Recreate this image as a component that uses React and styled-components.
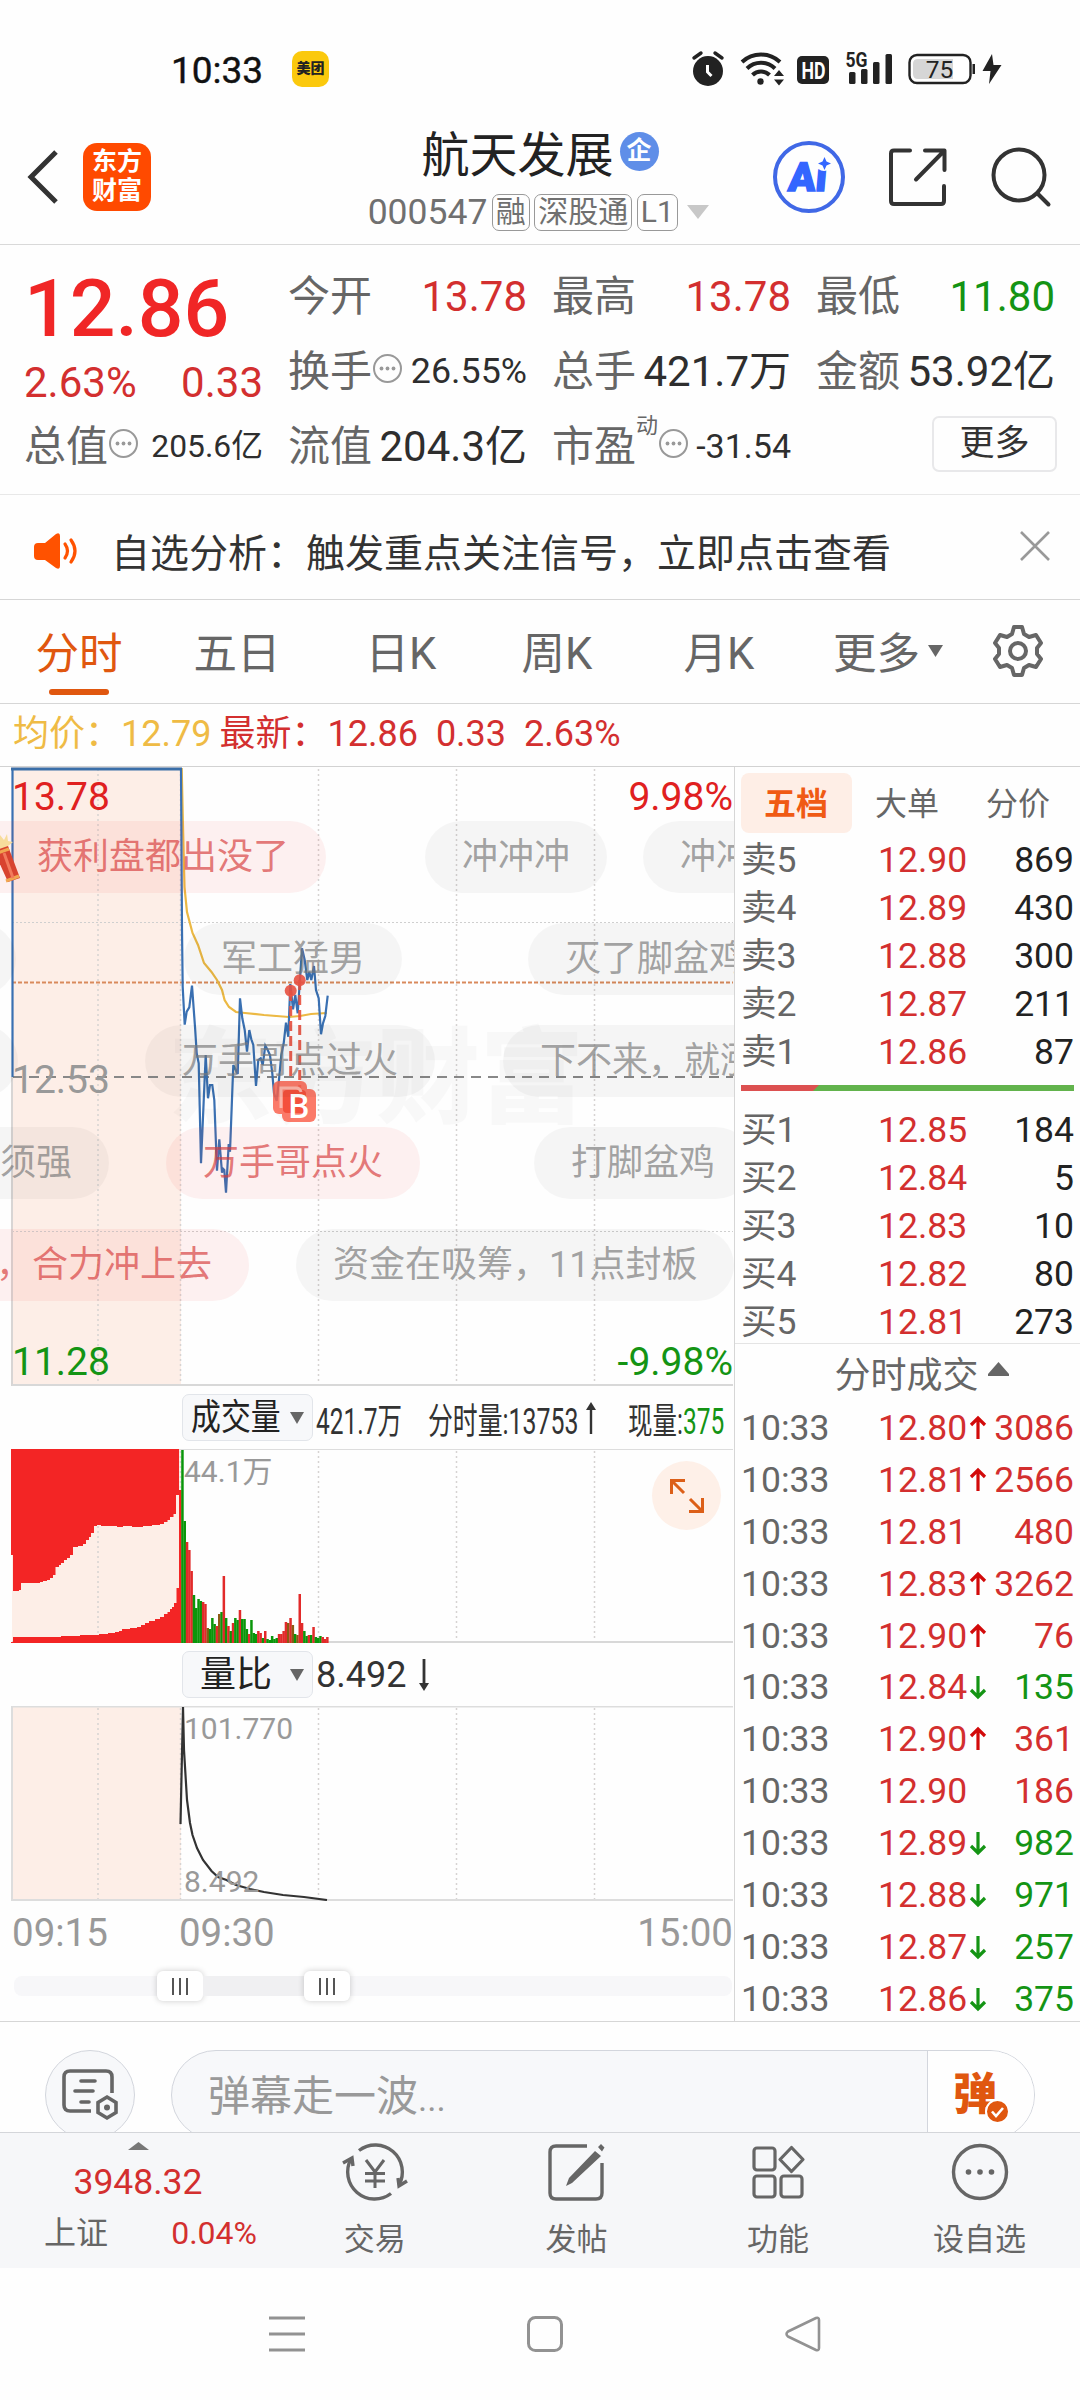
import React from 'react'
import styled, { createGlobalStyle, css } from 'styled-components'

const RED = '#d32f2f'
const GREEN = '#149414'
const ORANGE = '#e0570f'

const depthAsk = [
  ['卖5', '12.90', '869'],
  ['卖4', '12.89', '430'],
  ['卖3', '12.88', '300'],
  ['卖2', '12.87', '211'],
  ['卖1', '12.86', '87'],
]

const depthBid = [
  ['买1', '12.85', '184'],
  ['买2', '12.84', '5'],
  ['买3', '12.83', '10'],
  ['买4', '12.82', '80'],
  ['买5', '12.81', '273'],
]

const trades = [
  ['12.80', 'up', '3086'],
  ['12.81', 'up', '2566'],
  ['12.81', '', '480'],
  ['12.83', 'up', '3262'],
  ['12.90', 'up', '76'],
  ['12.84', 'down', '135'],
  ['12.90', 'up', '361'],
  ['12.90', '', '186'],
  ['12.89', 'down', '982'],
  ['12.88', 'down', '971'],
  ['12.87', 'down', '257'],
  ['12.86', 'down', '375'],
]

const bubbles = [
  { text: '获利盘都出没了', x: -60, row: 0, pad: 97, hot: true },
  { text: '冲冲冲', x: 425, row: 0 },
  { text: '冲冲冲', x: 643, row: 0 },
  { text: '', x: -58, row: 1 },
  { text: '军工猛男', x: 184, row: 1 },
  { text: '灭了脚盆鸡', x: 528, row: 1 },
  { text: '', x: -56, row: 2 },
  { text: '万手哥点过火', x: 145, row: 2 },
  { text: '下不来，就涨', x: 503, row: 2 },
  { text: '须强', x: -37, row: 3 },
  { text: '万手哥点火', x: 166, row: 3, hot: true },
  { text: '打脚盆鸡', x: 534, row: 3 },
  { text: '，合力冲上去', x: -41, row: 4, hot: true },
  { text: '资金在吸筹，11点封板', x: 296, row: 4 },
]

const pricePoints =
  '12.5,310 12.5,2 181,2 182,163 182.7,220 184.7,257.7 186.7,244.7 189.3,240.3 192,218.7 195,259.7 196.7,286.3 198.7,296.3 201,396.3 205.7,288 208,331.3 210,318 212.3,318 214.3,333 217,403.7 219.3,372.3 222,405.7 223.3,402 224.3,403 226,425.7 228.7,377 230,384.7 233.3,298 237.7,307 240,231.3 242.3,251.3 244.7,263 247,284.7 249.3,263 251.3,272.3 253.3,278 256,319 258.3,293 260.7,291.3 262.7,298 265.3,278.7 267.7,283 270,288 272.3,306.3 274,326.3 276.7,334 279.3,309.7 281.3,288 283.7,276.3 286,255.7 288.3,269.7 290.3,217 293,242.3 295.3,228 297.7,246.3 299.7,216.3 302,181.3 304.7,193 307.3,213 309.3,204.7 311.3,213 314,199 316,223 318.7,231.3 321,267.3 323,256.3 325.3,249 327.7,228.7'

const avgPoints =
  '181.7,1 183,60 184.5,120 187,145 192.5,166 198,178 204,196 211.5,205 217,213 222,223 224.6,233 229,240 236,245 245,246 264,248 289,250 300,249 311,247 327,246'

const ratioPoints =
  '180.5,118 183,1 184,44 187,94 190,117 192.5,129 197,142 203,154 211.5,165 218,171 226.5,174 236,179 250,183 264,186 283,189 304,191 327,194'

const volumes = [193, 122, 101, 93, 72, 48, 35, 44, 42, 41, 39, 15, 14, 25, 19, 17, 29, 31, 67, 25, 17, 12, 20, 25, 23, 33, 24, 24, 14, 9, 23, 10, 9, 12, 10, 5, 12, 4, 3, 7, 4, 5, 9, 9, 12, 21, 20, 25, 18, 9, 8, 49, 20, 12, 7, 8, 8, 16, 6, 5, 7, 6, 4, 6]
const volumeSides = 'ggrrrggggrrmgggrmgrgrgrggrgggrgggrrgrgggggrrrrmrmgmrrggrgrgggrrr'
const sideColor = { g: '#0a960a', r: '#e22a2a', m: '#8c5a14' }

function Grid({ height }) {
  return (
    <g stroke="#d6d3d2" strokeWidth="1.5" strokeDasharray="2 3">
      {[98, 180.5, 318.5, 456.5, 594.5].map((x) => (
        <line key={x} x1={x} x2={x} y1="2" y2={height} />
      ))}
    </g>
  )
}

function StatusIcons() {
  return (
    <svg width="312" height="36" viewBox="692 51 312 36" fill="#222">
      <circle cx="708" cy="71" r="15" />
      <path d="M694 58l7-5M715 53l7 5" stroke="#222" strokeWidth="3.4" strokeLinecap="round" />
      <path d="M707.5 65v7l4 4" stroke="#fff" strokeWidth="3" fill="none" />
      <g fill="none" stroke="#222" strokeWidth="4">
        <path d="M742 62a28 28 0 0 1 38 0" />
        <path d="M747 68.500a20 20 0 0 1 28 0" />
        <path d="M752.500 75a12 12 0 0 1 17 0" />
      </g>
      <circle cx="760.500" cy="81.500" r="3.200" />
      <path d="M779 70l5 6h-10zM779 85.500l5-6h-10z" />
      <rect x="797" y="56" width="32" height="28" rx="5" />
      <text x="801.500" y="78.500" fill="#fff" fontSize="23.500" fontWeight="700" textLength="24" lengthAdjust="spacingAndGlyphs">HD</text>
      <text x="845.500" y="67" fontSize="20" fontWeight="700" textLength="22" lengthAdjust="spacingAndGlyphs">5G</text>
      <rect x="849" y="72" width="6.500" height="12" rx="1.500" />
      <rect x="861" y="69" width="6.500" height="15" rx="1.500" />
      <rect x="873" y="62" width="6.500" height="22" rx="1.500" />
      <rect x="885.500" y="54" width="6.500" height="30" rx="1.500" />
      <rect x="909.500" y="55" width="61" height="28" rx="7.500" fill="#fff" stroke="#222" strokeWidth="2.400" />
      <path d="M918 59h35v20h-35q-5 0-5-5v-10q0-5 5-5z" fill="#d6d6d6" />
      <rect x="972.500" y="64" width="2.500" height="10" />
      <text x="939.500" y="78" fontSize="24.500" textAnchor="middle">75</text>
      <path d="M992 54l-9.500 17h8l-1.500 13 12.500-19h-8z" />
    </svg>
  )
}

function MoreDots() {
  return (
    <svg width="31" height="31" viewBox="0 0 31 31" fill="#999">
      <circle cx="15.500" cy="15.500" r="13.500" fill="none" stroke="#999" strokeWidth="2" />
      <circle cx="9.500" cy="15.500" r="1.900" />
      <circle cx="15.500" cy="15.500" r="1.900" />
      <circle cx="21.500" cy="15.500" r="1.900" />
    </svg>
  )
}

function Arrow({ dir }) {
  return (
    <svg width="16" height="24" viewBox="0 0 16 24" fill="none" strokeWidth="3.200" stroke={dir === 'up' ? '#d20a0a' : GREEN}>
      {dir === 'up' && <path d="M8 23V3M1 9l7-7 7 7" />}
      {dir === 'down' && <path d="M8 1v20M1 15l7 7 7-7" />}
    </svg>
  )
}

function Stat({ label, value, color, small, sup, dots }) {
  return (
    <StatCell>
      <StatLabel>
        {label}
        {sup && <sup>{sup}</sup>}
        {dots && <MoreDots />}
      </StatLabel>
      <StatValue $color={color} $size={small}>{value}</StatValue>
    </StatCell>
  )
}

function PricePane() {
  return (
    <Pane $h={619}>
      <svg width="734" height="619">
        <rect x="12" y="0" width="169" height="619" fill="#fdeee7" />
        <Grid height={619} />
        <g stroke="#cfcfcf" strokeDasharray="2 2">
          <line x1="12" x2="733" y1="155.500" y2="155.500" />
          <line x1="12" x2="733" y1="464.500" y2="464.500" />
        </g>
        <text x="376" y="348" fontSize="104" fontWeight="900" fill="rgba(0,0,0,.025)" textAnchor="middle">东方财富</text>
        <line x1="12" x2="733" y1="310" y2="310" stroke="#888" strokeWidth="2" strokeDasharray="10 7" />
        <line x1="12" x2="733" y1="215.500" y2="215.500" stroke="#d98a5c" strokeWidth="2" strokeDasharray="4 2" />
        <line x1="12" x2="12" y1="310" y2="619" stroke="#d8d5d4" strokeWidth="2" />
        <line x1="12" x2="733" y1="618" y2="618" stroke="#d8d8d8" strokeWidth="2" />
        <polyline points={avgPoints} fill="none" stroke="#ecb944" strokeWidth="2.200" />
        <polyline points={pricePoints} fill="none" stroke="#3a70b2" strokeWidth="2.200" />
        <line x1="11" x2="182" y1="2" y2="2" stroke="#3a6ea8" strokeWidth="3" />
        <g stroke="#e8503e" strokeWidth="3" strokeDasharray="10 5" opacity=".9">
          <line x1="290.700" x2="290.700" y1="224" y2="314" />
          <line x1="299.700" x2="299.700" y1="213" y2="322" />
        </g>
        <g fill="#f05545" opacity=".9">
          <circle cx="290.700" cy="223.700" r="6" />
          <circle cx="299.700" cy="213.300" r="6" />
        </g>
        <g fill="#fb6450" opacity=".85">
          <rect x="273" y="314" width="34" height="33" rx="6" />
          <rect x="282" y="322" width="34" height="33" rx="6" />
        </g>
        <rect x="283" y="323" width="23" height="23" rx="4" fill="#f4503c" />
        <path d="M281 341v-20h15q4 0 5 4" fill="none" stroke="#fcb5a8" strokeWidth="3" />
        <text x="299" y="350.500" fontSize="33" fontWeight="500" fill="#fff" textAnchor="middle">B</text>
      </svg>
      <AxisText $top={14} $color="#e02020">13.78</AxisText>
      <AxisText $top={14} $right $color="#e02020">9.98%</AxisText>
      <AxisText $top={297} $color="#999">12.53</AxisText>
      <AxisText $top={579} $color={GREEN}>11.28</AxisText>
      <AxisText $top={579} $right $color={GREEN}>-9.98%</AxisText>
      {bubbles.map((b, i) => (
        <Bubble key={i} $x={b.x} $row={b.row} $pad={b.pad} $hot={b.hot}>{b.text}</Bubble>
      ))}
      <Cracker width="24" height="52" viewBox="0 0 24 52">
        <path d="M0 4l4 5 3-6 1 7 5 1-5 4 2 5-6-2-4 2z" fill="#f7dc9c" />
        <path d="M-6 20L8 15l12 32-12 4z" fill="#d8432f" />
        <path d="M-5 23L9 18M6 50l13-5" stroke="#f0a650" strokeWidth="3" />
        <path d="M4 22l9 25" stroke="#f27a5c" strokeWidth="3" />
      </Cracker>
    </Pane>
  )
}

function VolumePane() {
  return (
    <Pane $h={194}>
      <svg width="734" height="194">
        <rect x="12" width="169" height="194" fill="#fdeee7" />
        <Grid height={194} />
        <line x1="12" x2="733" y1=".5" y2=".5" stroke="#ddd" />
        <line x1="12" x2="733" y1="193" y2="193" stroke="#d8d8d8" strokeWidth="2" />
        <g fill="#f32525">
          <path d="M11 0V106H13V142H19V141H21V134H40V133H43V132H47V131H50V129H53V126H55.500V118H59V116H61V114H64V111H67V109H70V106H73V98H78V97H83V95H86V91H89V88H91V84H94V77H97V76H101V77H117V78H123V77H132V78H143V77H152V76H160V75H164V73H167.500V71H170V68H173.500V65H176V46H179V0z" />
          <path d="M11 194V193H13V188H61V187H80V186H99V185H108V184H115V183H119V182H122V180H130V179H137V178H141V176H145V174H149V172H155V170H160V168H164V165H167.500V163H170V160H172V158H174V154H176.500V139H179V41H181.500V194z" />
        </g>
        {volumes.map((v, i) => (
          <rect key={i} x={181.2 + i * 2.3} y={194 - v} width="2.5" height={v} fill={sideColor[volumeSides[i]]} />
        ))}
      </svg>
      <ScaleText $top={6}>44.1万</ScaleText>
      <Expand>
        <svg width="34" height="34" viewBox="0 0 34 34" fill="none" stroke="#dc5f18" strokeWidth="3">
          <path d="M1.500 15V1.500H15M2 2l12 12M32.500 19v13.500H19M32 32L20 20" />
        </svg>
      </Expand>
    </Pane>
  )
}

function RatioPane() {
  return (
    <Pane $h={195}>
      <svg width="734" height="195">
        <rect x="12" width="169" height="194" fill="#fdeee7" />
        <Grid height={194} />
        <path d="M733 .5H12V194h721" fill="none" stroke="#ddd" strokeWidth="2" />
        <polyline points={ratioPoints} fill="none" stroke="#333" strokeWidth="2.200" />
      </svg>
      <ScaleText $top={6}>101.770</ScaleText>
      <ScaleText $top={159}>8.492</ScaleText>
    </Pane>
  )
}

function App() {
  return (
    <>
      <GlobalStyle />
      <Screen>
        <StatusBar>
          <Clock>10:33</Clock>
          <Meituan>美团</Meituan>
          <StatusIcons />
        </StatusBar>

        <Header>
          <HeaderLeft>
            <svg width="32" height="56" viewBox="0 0 32 56" fill="none" stroke="#333" strokeWidth="5">
              <path d="M29 3L4 28l25 25" />
            </svg>
            <Logo>东方<br />财富</Logo>
          </HeaderLeft>
          <Title>
            <h1>航天发展 <Badge>企</Badge></h1>
            <SubTitle>
              000547
              <Tag>融</Tag>
              <Tag>深股通</Tag>
              <Tag>L1</Tag>
              <svg width="22" height="14"><path d="M0 0h22L11 14z" fill="#c8c8c8" /></svg>
            </SubTitle>
          </Title>
          <HeaderRight>
            <svg width="72" height="72" viewBox="0 0 72 72">
              <circle cx="36" cy="36" r="34" fill="none" stroke="#4068e6" strokeWidth="4" />
              <text x="15" y="50" fontSize="40" fontWeight="900" fill="#3366ff" stroke="#3366ff" strokeWidth="1.500" transform="translate(4 0) skewX(-5)">Ai</text>
              <circle cx="51" cy="22" r="8" fill="#fefefe" />
              <path d="M51.500 16l2 4.500 4.500 2-4.500 2-2 4.500-2-4.500-4.500-2 4.500-2z" fill="#3366ff" />
            </svg>
            <svg width="58" height="58" viewBox="0 0 58 58" fill="none" stroke="#333" strokeWidth="4" strokeLinecap="round" strokeLinejoin="round">
              <path d="M21 2.500H5q-3 0-3 3V53q0 3 3 3h47q3 0 3-3V38" />
              <path d="M36 2.500h19.500V22M55 3L27 31.500" />
            </svg>
            <svg width="60" height="60" viewBox="0 0 60 60" fill="none" stroke="#333" strokeWidth="4" strokeLinecap="round">
              <circle cx="28" cy="28" r="25.500" />
              <path d="M47 47l10.500 10.500" />
            </svg>
          </HeaderRight>
        </Header>

        <Quote>
          <PriceBlock>
            <Price>12.86</Price>
            <Change><span>2.63%</span><span>0.33</span></Change>
          </PriceBlock>
          <Stat label="今开" value="13.78" color={RED} />
          <Stat label="最高" value="13.78" color={RED} />
          <Stat label="最低" value="11.80" color={GREEN} />
          <Stat label="换手" value="26.55%" dots small={35.8} />
          <Stat label="总手" value="421.7万" />
          <Stat label="金额" value="53.92亿" />
          <Stat label="总值" value="205.6亿" dots small={31.8} />
          <Stat label="流值" value="204.3亿" />
          <Stat label="市盈" sup="动" value="-31.54" dots small={34} />
          <MoreButton>更多</MoreButton>
        </Quote>

        <Notice>
          <svg width="44" height="36" viewBox="0 0 44 36" fill="#ff5200">
            <path d="M4 10h7L22 1q4-2 4 2v30q0 4-4 2l-11-8H4q-4 0-4-4v-9q0-4 4-4z" />
            <path d="M31 11q5 7 0 14M37 7q8 11 0 22" fill="none" stroke="#ff5200" strokeWidth="3.200" strokeLinecap="round" />
          </svg>
          <p>自选分析：触发重点关注信号，立即点击查看</p>
          <svg width="30" height="30" viewBox="0 0 30 30" stroke="#999" strokeWidth="2.600"><path d="M1 1l28 28M29 1L1 29" /></svg>
        </Notice>

        <Tabs>
          <Tab $active>分时</Tab>
          <Tab>五日</Tab>
          <Tab>日K</Tab>
          <Tab>周K</Tab>
          <Tab>月K</Tab>
          <Tab>更多<svg width="15" height="12"><path d="M0 0h15L7.500 12z" fill="#666" /></svg></Tab>
          <Tab>
            <svg width="54" height="54" viewBox="0 0 54 54" fill="none" stroke="#666" strokeWidth="4" strokeLinejoin="round">
              <path d="M23 3h8l2 7 5 3 7-2 5 8-4 5v6l4 5-5 8-7-2-5 3-2 7h-8l-2-7-5-3-7 2-5-8 4-5v-6l-4-5 5-8 7 2 5-3z" />
              <circle cx="27" cy="27" r="8" />
            </svg>
          </Tab>
        </Tabs>

        <Latest>
          <Avg>均价：12.79</Avg>
          <span>最新：12.86</span>
          <span>0.33</span>
          <span>2.63%</span>
        </Latest>

        <Main>
          <Charts>
            <PricePane />
            <PaneHead>
              <Picker><Squeeze $w={90} $scale={0.83}>成交量</Squeeze><i /></Picker>
              <Squeeze $w={112} $scale={0.68}>421.7万</Squeeze>
              <Squeeze $w={154} $scale={0.69}>分时量:13753</Squeeze>
              <LongArrow width="12" height="32" viewBox="0 0 12 32"><path d="M6 0l5 8H7.200v24H4.800V8H1z" fill="#333" /></LongArrow>
              <Squeeze $w={98} $scale={0.68}>现量:<b>375</b></Squeeze>
            </PaneHead>
            <VolumePane />
            <PaneHead>
              <Picker $wide>量比<i /></Picker>
              8.492
              <DownArrow width="12" height="32" viewBox="0 0 12 32"><path d="M6 32l5-8H7.400V0H4.600v24H1z" fill="#333" /></DownArrow>
            </PaneHead>
            <RatioPane />
            <TimeAxis><span>09:15</span><span>09:30</span><span>15:00</span></TimeAxis>
            <Track>
              <Handle><i /><i /><i /></Handle>
              <TrackRange />
              <Handle><i /><i /><i /></Handle>
            </Track>
          </Charts>

          <Side>
            <SideTabs>
              <SideTab $active>五档</SideTab>
              <SideTab>大单</SideTab>
              <SideTab>分价</SideTab>
            </SideTabs>
            {depthAsk.map(([label, price, qty]) => (
              <DepthRow key={label}><span>{label}</span><em>{price}</em><strong>{qty}</strong></DepthRow>
            ))}
            <RatioBar><svg width="333" height="6"><path d="M0 0h333v6H0z" fill="#62b34c" /><path d="M0 0h78l-6 6H0z" fill="#dc5050" /></svg></RatioBar>
            {depthBid.map(([label, price, qty]) => (
              <DepthRow key={label}><span>{label}</span><em>{price}</em><strong>{qty}</strong></DepthRow>
            ))}
            <TradesHead>分时成交<svg width="21" height="14"><path d="M10.500 0L21 12v2H0v-2z" fill="#666" /></svg></TradesHead>
            {trades.map(([price, dir, qty], i) => (
              <TradeRow key={i} $down={dir === 'down'}>
                <span>10:33</span>
                <em>{price}</em>
                <Arrow dir={dir} />
                <strong>{qty}</strong>
              </TradeRow>
            ))}
          </Side>
        </Main>

        <CommentBar>
          <RoundButton>
            <svg width="56" height="52" viewBox="0 0 56 52" fill="none" stroke="#666" strokeWidth="3.600">
              <path d="M29 42H8q-6 0-6-6V8q0-6 6-6h36q6 0 6 6v16" />
              <path d="M19 12h14M13 22h18M19 33h8" strokeLinecap="round" />
              <path d="M45 28l9 5.500v10L45 49l-9-5.500v-10z" />
              <circle cx="45" cy="38.500" r="3" fill="#666" stroke="none" />
            </svg>
          </RoundButton>
          <CommentInput>
            <span>弹幕走一波<i>...</i></span>
            <Danmu>
              弹
              <svg width="25" height="25" viewBox="0 0 25 25">
                <circle cx="12.500" cy="12.500" r="11.500" fill={ORANGE} stroke="#fff" strokeWidth="2" />
                <path d="M7 12.500l4 4.500 7-8" fill="none" stroke="#fff" strokeWidth="2.600" />
              </svg>
            </Danmu>
          </CommentInput>
        </CommentBar>

        <BottomBar>
          <IndexCell>
            <svg width="21" height="8"><path d="M10.500 0L21 8H0z" fill="#777" /></svg>
            <IndexValue>3948.32</IndexValue>
            <IndexLine><span>上证</span><b>0.04%</b></IndexLine>
          </IndexCell>
          <NavCell>
            <svg width="66" height="60" viewBox="0 0 66 60" fill="none" stroke="#666" strokeWidth="3.400">
              <path d="M17 8.500A27 27 0 0 1 57 43M49 51.500A27 27 0 0 1 9 17" />
              <path d="M1 21l9-5 1 8M65 39l-8 5-1-8" />
              <path d="M24 18l9 12 9-12M33 30v16M23 31.500h20M23 39h20" strokeWidth="3" />
            </svg>
            交易
          </NavCell>
          <NavCell>
            <svg width="58" height="60" viewBox="0 0 58 60" fill="none" stroke="#666" strokeWidth="3.400">
              <path d="M40 4H9q-6 0-6 6v41q0 6 6 6h40q6 0 6-6V21" />
              <path d="M48 9l6 5-29 27-6 3 3-8zM51 5l3-3 3.500 3.500-2.500 4z" fill="#666" stroke="none" />
            </svg>
            发帖
          </NavCell>
          <NavCell>
            <svg width="54" height="60" viewBox="0 0 54 60" fill="none" stroke="#666" strokeWidth="3.200">
              <rect x="3" y="6" width="21" height="22" rx="3" />
              <rect x="3" y="34" width="21" height="21" rx="3" />
              <rect x="30" y="34" width="21" height="21" rx="3" />
              <path d="M40.500 5.500L52 17.500 40.500 29.500 29 17.500z" strokeLinejoin="round" />
            </svg>
            功能
          </NavCell>
          <NavCell>
            <svg width="58" height="60" viewBox="0 0 58 60" fill="#666">
              <circle cx="29" cy="30" r="26.500" fill="none" stroke="#666" strokeWidth="3.400" />
              <circle cx="17.500" cy="30" r="2.800" />
              <circle cx="29" cy="30" r="2.800" />
              <circle cx="40.500" cy="30" r="2.800" />
            </svg>
            设自选
          </NavCell>
        </BottomBar>

        <SystemNav>
          <svg width="36" height="36" stroke="#929292" strokeWidth="3"><path d="M0 2h36M0 18h36M0 34h36" /></svg>
          <svg width="36" height="36" fill="none" stroke="#929292" strokeWidth="3"><rect x="1.500" y="1.500" width="33" height="33" rx="7" /></svg>
          <svg width="36" height="36" fill="none" stroke="#929292" strokeWidth="2.600" strokeLinejoin="round"><path d="M3 15.500L31 2q3-1 3 2v28q0 3-3 2L3 20.500q-3-2.500 0-5z" /></svg>
        </SystemNav>
      </Screen>
    </>
  )
}

export default App

const GlobalStyle = createGlobalStyle`
  * {
    box-sizing: border-box;
  }

  body {
    margin: 0;
    background: #fefefe;
    font-family: Roboto, 'Noto Sans CJK SC', sans-serif;
    color: #333;
  }

  svg {
    display: block;
    flex: none;
    overflow: visible;
  }

  h1, p {
    margin: 0;
    font-weight: 400;
  }

  em, i {
    font-style: normal;
  }

  b, strong {
    font-weight: 400;
  }
`

const Screen = styled.div`
  width: 1080px;
  height: 2400px;
  display: flex;
  flex-direction: column;
  overflow: hidden;
  white-space: nowrap;
`

const StatusBar = styled.div`
  height: 100px;
  display: flex;
  align-items: flex-start;
  padding: 51px 76px 0 171px;

  & > svg {
    margin-left: auto;
  }
`

const Clock = styled.span`
  width: 121px;
  font-size: 37px;
  line-height: 39px;
  color: #111;
  -webkit-text-stroke: 0.4px #111;
`

const Meituan = styled.span`
  width: 37px;
  height: 36px;
  border-radius: 10px;
  background: #fbc90d;
  color: #222;
  font-size: 14px;
  font-weight: 900;
  line-height: 35px;
  text-align: center;
`

const Header = styled.header`
  height: 145px;
  display: grid;
  grid-template-columns: 320px 1fr 320px;
  border-bottom: 1.5px solid #d9d9d9;
`

const HeaderLeft = styled.div`
  display: flex;
  align-items: center;
  gap: 24px;
  padding: 10px 0 0 27px;
`

const Logo = styled.div`
  width: 68px;
  height: 68px;
  border-radius: 14px;
  background: #ff4a00;
  color: #fff;
  font-size: 25px;
  font-weight: 700;
  line-height: 29px;
  padding-top: 4px;
  text-align: center;
`

const Title = styled.div`
  display: flex;
  flex-direction: column;
  align-items: center;
  padding-top: 21px;

  & h1 {
    display: flex;
    align-items: center;
    gap: 6px;
    height: 60px;
    font-size: 48px;
    color: #222;
  }
`

const Badge = styled.span`
  width: 39px;
  height: 39px;
  margin-top: 1px;
  border-radius: 50%;
  background: #5f8ee8;
  color: #fff;
  font-size: 25px;
  font-weight: 700;
  line-height: 37px;
  text-align: center;
`

const SubTitle = styled.div`
  display: flex;
  align-items: center;
  gap: 4.5px;
  height: 54px;
  margin: 4px 3px 0 0;
  font-size: 35.5px;
  color: #707070;

  & svg {
    margin-left: 5px;
  }
`

const Tag = styled.span`
  height: 37px;
  padding: 0 3px;
  border: 1.5px solid #999;
  border-radius: 7px;
  font-size: 30px;
  line-height: 34px;
`

const HeaderRight = styled.div`
  display: flex;
  align-items: center;
  justify-content: flex-end;
  gap: 44px;
  padding: 9px 29px 0 0;
`

const Quote = styled.section`
  height: 250px;
  display: grid;
  grid-template-columns: repeat(4, 239px);
  grid-template-rows: repeat(3, 75px);
  column-gap: 25px;
  padding: 14px 0 0 24px;
  border-bottom: 1px solid #e8e8e8;
`

const PriceBlock = styled.div`
  grid-row: span 2;
  display: flex;
  flex-direction: column;
`

const Price = styled.div`
  font-size: 80.5px;
  font-weight: 500;
  line-height: 99px;
  color: #f02626;
`

const Change = styled.div`
  display: flex;
  justify-content: space-between;
  font-size: 42px;
  line-height: 50px;
  color: ${RED};
`

const StatCell = styled.div`
  display: flex;
  align-items: center;
  justify-content: space-between;
`

const StatLabel = styled.span`
  display: flex;
  align-items: center;
  font-size: 42px;
  line-height: 75px;
  color: #666;

  & sup {
    align-self: flex-start;
    font-size: 22px;
    line-height: 34px;
  }

  & svg {
    margin: -6px 0 0;
  }
`

const StatValue = styled.span`
  font-size: ${({ $size }) => $size || 42}px;
  line-height: 75px;
  color: ${({ $color }) => $color || '#2e2e2e'};
`

const MoreButton = styled.div`
  position: relative;
  justify-self: end;
  align-self: center;
  width: 125px;
  height: 56px;
  margin: 0 -2px 5px 0;
  border: 2px solid #e8e8ea;
  border-radius: 7px;
  font-size: 35px;
  line-height: 51px;
  text-align: center;
`

const Notice = styled.section`
  height: 105px;
  display: flex;
  align-items: center;
  padding: 8px 30px 0 34px;
  border-bottom: 1px solid #d6d6d6;

  & p {
    flex: 1;
    margin-top: -3px;
    padding-left: 33px;
    font-size: 39px;
  }

  & svg:last-child {
    margin-top: -11px;
  }
`

const Tabs = styled.nav`
  height: 104px;
  display: grid;
  grid-template-columns: 158px 158px 170px 142px 182px 156px 104px;
  border-bottom: 1px solid #d6d6d6;
`

const Tab = styled.div`
  position: relative;
  display: flex;
  align-items: center;
  justify-content: center;
  gap: 8px;
  height: 103px;
  padding-bottom: 2px;
  font-size: 43.5px;
  color: #666;

  ${({ $active }) =>
    $active &&
    css`
      color: ${ORANGE};

      &::after {
        content: '';
        position: absolute;
        bottom: 8px;
        left: 49px;
        width: 60px;
        height: 6px;
        border-radius: 3px;
        background: ${ORANGE};
      }
    `}
`

const Latest = styled.div`
  height: 63px;
  display: flex;
  align-items: baseline;
  padding-left: 13px;
  border-bottom: 1px solid #d2d2d2;
  font-size: 36px;
  line-height: 61px;
  color: ${RED};

  & span + span {
    margin-left: 18px;
  }

  & span:nth-child(2) {
    margin-left: 8px;
  }
`

const Avg = styled.span`
  color: #efbb45;
`

const Main = styled.main`
  height: 1255px;
  display: flex;
  border-bottom: 1.5px solid #d6d6d6;
`

const Charts = styled.div`
  width: 734px;
  display: flex;
  flex-direction: column;
`

const Pane = styled.div`
  position: relative;
  height: ${({ $h }) => $h}px;
  overflow: hidden;
`

const AxisText = styled.span`
  position: absolute;
  top: ${({ $top }) => $top}px;
  ${({ $right }) => ($right ? 'right: 1px;' : 'left: 12px;')}
  font-size: 39px;
  line-height: 32px;
  color: ${({ $color }) => $color};
`

const ScaleText = styled.span`
  position: absolute;
  top: ${({ $top }) => $top}px;
  left: 184px;
  font-size: 30px;
  line-height: 34px;
  color: #999;
`

const Bubble = styled.span`
  position: absolute;
  left: ${({ $x }) => $x}px;
  top: ${({ $row }) => 54 + $row * 102}px;
  min-width: 74px;
  height: 72px;
  padding: 0 37px 0 ${({ $pad }) => $pad || 37}px;
  border-radius: 36px;
  font-size: 36px;
  line-height: 72px;
  color: ${({ $hot }) => ($hot ? 'rgba(214, 60, 60, .68)' : 'rgba(120, 120, 120, .68)')};
  background: ${({ $hot }) => ($hot ? 'rgba(240, 50, 50, .07)' : 'rgba(0, 0, 0, .037)')};
`

const Cracker = styled.svg`
  position: absolute;
  left: 0;
  top: 64px;
`

const Expand = styled.div`
  position: absolute;
  left: 652px;
  top: 12px;
  width: 69px;
  height: 69px;
  border-radius: 50%;
  background: #fef0e8;
  display: flex;
  align-items: center;
  justify-content: center;
`

const PaneHead = styled.div`
  height: 63px;
  display: flex;
  align-items: center;
  padding-left: 182px;
  font-size: 36px;

  & b {
    color: ${GREEN};
  }
`

const Picker = styled.div`
  width: 131px;
  height: 47px;
  margin-right: 3px;
  padding: 0 8px 0 ${({ $wide }) => ($wide ? 17 : 8)}px;
  border: 1.5px solid #e2e5ea;
  border-radius: 7px;
  background: #f7f8fa;
  display: flex;
  align-items: center;
  justify-content: space-between;
  line-height: 44px;
  color: #222;

  & i {
    border: 7.5px solid transparent;
    border-top: 12px solid #666;
    border-bottom: 0;
  }
`

/* narrow glyphs, laid out at their squeezed width */
const Squeeze = styled.span`
  width: ${({ $w }) => $w}px;
  transform: scaleX(${({ $scale }) => $scale});
  transform-origin: left center;
`

const LongArrow = styled.svg`
  margin-left: 3px;
  margin-right: 31px;
`

const DownArrow = styled.svg`
  margin-left: 12px;
`

const TimeAxis = styled.div`
  display: flex;
  padding: 0 1px 0 12px;
  font-size: 38.5px;
  line-height: 64px;
  height: 65px;
  color: #999;

  & span:nth-child(2) {
    margin-left: 71px;
  }

  & span:last-child {
    margin-left: auto;
  }
`

const Track = styled.div`
  display: flex;
  align-items: center;
  width: 718px;
  height: 20px;
  margin: 10px 0 0 14px;
  padding-left: 143px;
  border-radius: 8px;
  background: #f7f7f9;
`

const TrackRange = styled.div`
  width: 101px;
  height: 20px;
  background: #f0f0f2;
`

const Handle = styled.div`
  width: 46px;
  height: 30px;
  border-radius: 6px;
  background: #fff;
  box-shadow: 0 0 6px rgba(0, 0, 0, 0.2);
  display: flex;
  align-items: center;
  justify-content: center;
  gap: 5px;

  & i {
    width: 2px;
    height: 17px;
    background: #555;
  }
`

const Side = styled.aside`
  flex: 1;
  border-left: 1.5px solid #d6d6d6;
`

const SideTabs = styled.div`
  display: grid;
  grid-template-columns: 111px 111px 111px;
  padding: 6px 0 3px 6px;
`

const SideTab = styled.div`
  height: 60px;
  border-radius: 8px;
  font-size: 32px;
  line-height: 62px;
  text-align: center;
  text-indent: -1px;
  color: #666;

  ${({ $active }) =>
    $active &&
    css`
      background: #feeee6;
      color: #f05a14;
      font-weight: 700;
    `}
`

const row = css`
  display: grid;
  align-items: center;
  padding: 0 6px;
  font-size: 35.5px;

  & span {
    color: #666;
  }

  & em {
    color: ${RED};
  }

  & strong {
    text-align: right;
  }
`

const DepthRow = styled.div`
  ${row}
  grid-template-columns: 137px 100px 1fr;
  height: 48px;
  line-height: 49px;

  & strong {
    color: #222;
  }
`

const RatioBar = styled.div`
  height: 30px;
  padding: 9px 0 0 6px;
`

const TradesHead = styled.div`
  display: flex;
  align-items: center;
  justify-content: center;
  gap: 9px;
  height: 59px;
  margin-top: -3px;
  padding: 0 0 3px 28px;
  border-top: 1px solid #e4e4e4;
  font-size: 36px;
  color: #666;

  & svg {
    margin-top: -6px;
  }
`

const TradeRow = styled.div`
  ${row}
  grid-template-columns: 137px 92px 16px 1fr;
  height: 51.9px;
  line-height: 52px;

  & strong {
    color: ${({ $down }) => ($down ? GREEN : RED)};
  }
`

const CommentBar = styled.div`
  height: 110px;
  display: flex;
  align-items: flex-start;
  gap: 36px;
  padding: 28px 45px 0;
  overflow: hidden;
`

const RoundButton = styled.div`
  flex: none;
  width: 90px;
  height: 90px;
  border: 1.5px solid #d3d6dd;
  border-radius: 50%;
  background: #f7f8fa;
  display: flex;
  align-items: center;
  justify-content: center;
`

const CommentInput = styled.div`
  flex: 1;
  height: 90px;
  display: flex;
  border: 1.5px solid #d3d6dd;
  border-radius: 45px;
  background: #f7f8fa;
  overflow: hidden;

  & > span {
    flex: 1;
    padding-left: 36px;
    font-size: 42px;
    line-height: 92px;
    color: #999;
  }

  & i {
    font-size: 35px;
  }
`

const Danmu = styled.div`
  position: relative;
  width: 107px;
  padding-left: 25px;
  border-left: 1.5px solid #d3d6dd;
  background: #fefefe;
  font-size: 44px;
  font-weight: 900;
  line-height: 88px;
  color: ${ORANGE};

  & svg {
    position: absolute;
    left: 57px;
    top: 48px;
  }
`

const BottomBar = styled.nav`
  height: 136px;
  display: grid;
  grid-template-columns: 274px repeat(4, 201.6px);
  background: #f6f7f9;
  border-top: 1px solid #d4d6da;
`

const IndexCell = styled.div`
  display: flex;
  flex-direction: column;
  align-items: center;
  padding: 9px 0 0 2px;
`

const IndexValue = styled.div`
  margin-top: 10px;
  font-size: 35.5px;
  line-height: 45px;
  color: ${RED};
`

const IndexLine = styled.div`
  display: flex;
  justify-content: space-between;
  width: 213px;
  margin: 4px 0 0 25px;
  font-size: 32px;
  line-height: 48px;
  color: #666;

  & b {
    color: ${RED};
  }
`

const NavCell = styled.div`
  display: flex;
  flex-direction: column;
  align-items: center;
  padding-top: 9px;
  font-size: 31px;
  line-height: 40px;
  color: #666;

  & svg {
    margin-bottom: 18px;
  }
`

const SystemNav = styled.div`
  display: flex;
  justify-content: center;
  gap: 222px;
  padding: 48px 0 0 10px;
`
